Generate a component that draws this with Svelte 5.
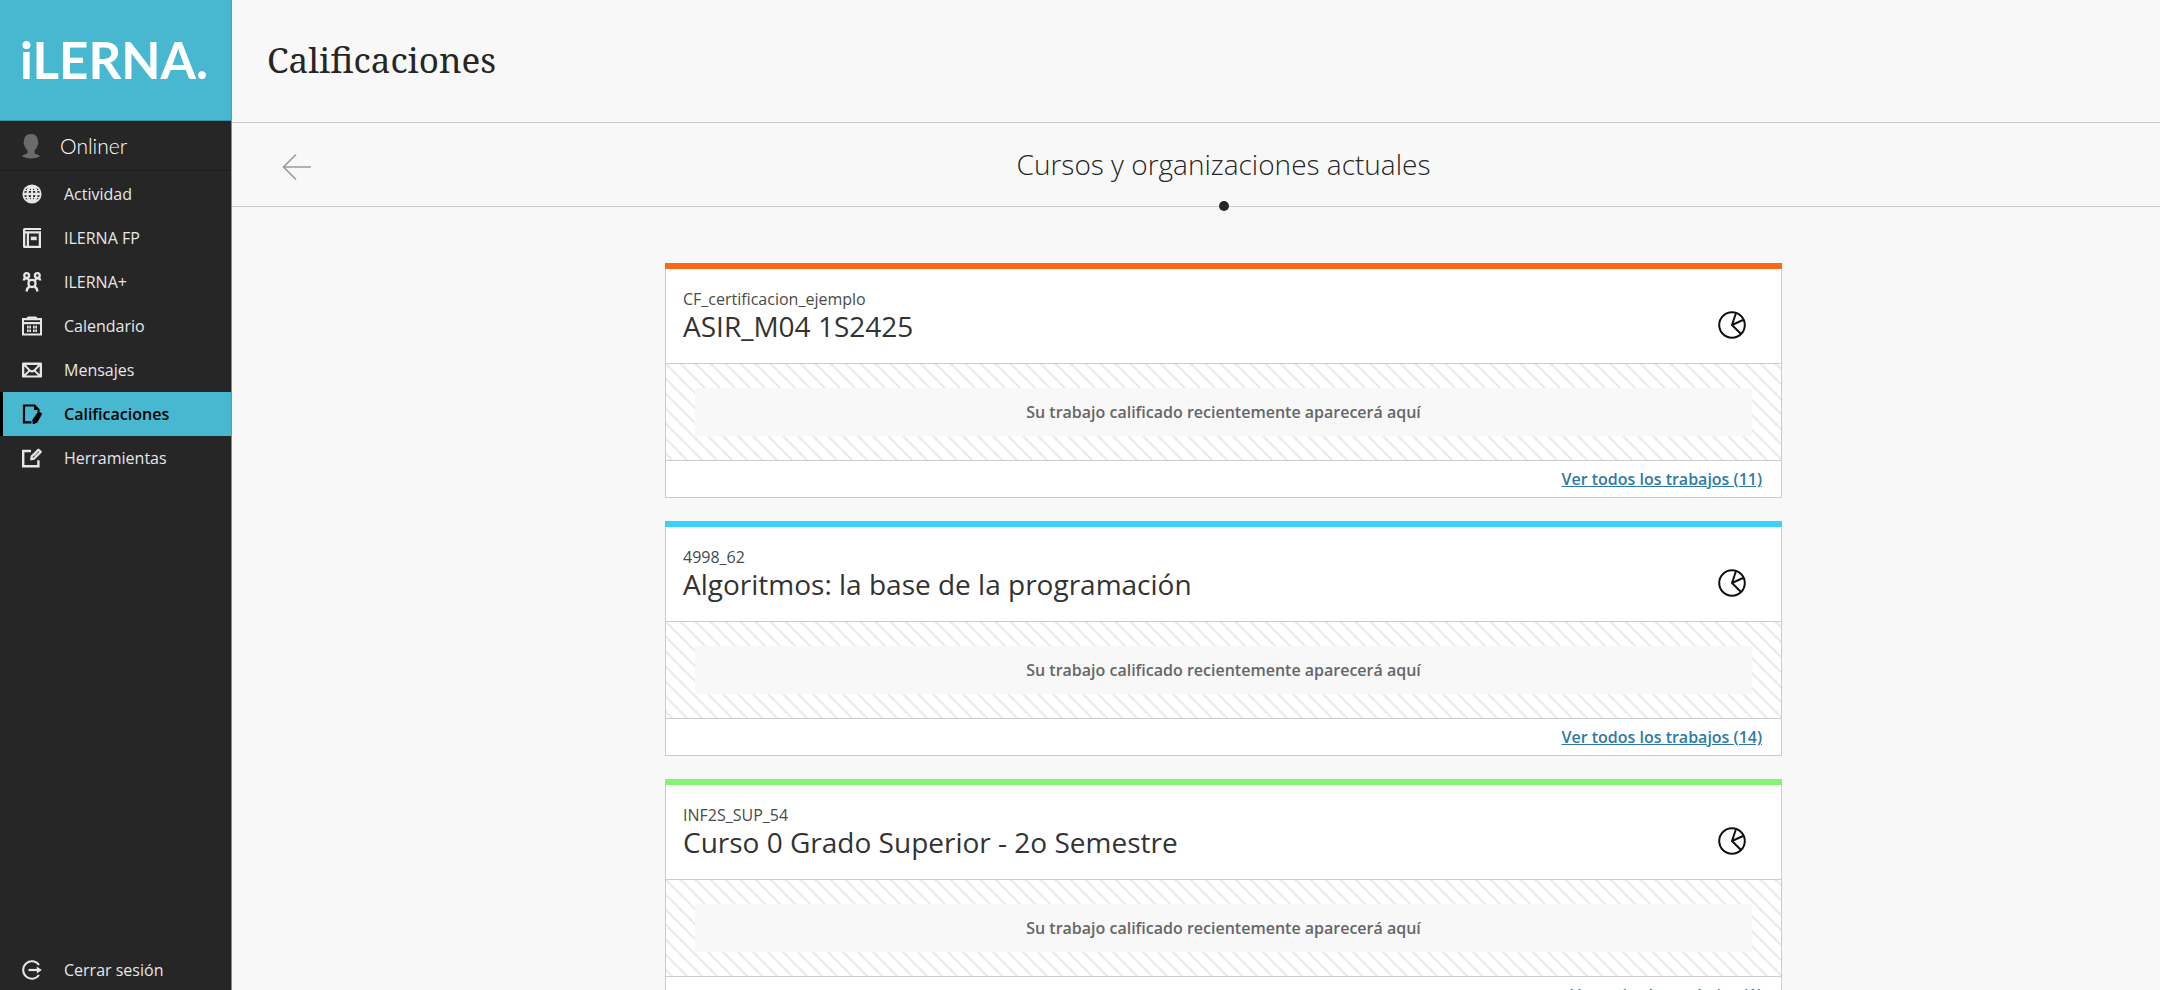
<script lang="ts">
  type Course = {
    code: string;
    name: string;
    color: string;
    works: number;
  };

  const navItems = [
    { id: "activity", label: "Actividad" },
    { id: "institution", label: "ILERNA FP" },
    { id: "groups", label: "ILERNA+" },
    { id: "calendar", label: "Calendario" },
    { id: "messages", label: "Mensajes" },
    { id: "grades", label: "Calificaciones" },
    { id: "tools", label: "Herramientas" },
  ];

  const courses: Course[] = [
    { code: "CF_certificacion_ejemplo", name: "ASIR_M04 1S2425", color: "#ff6615", works: 11 },
    { code: "4998_62", name: "Algoritmos: la base de la programación", color: "#38d3f8", works: 14 },
    { code: "INF2S_SUP_54", name: "Curso 0 Grado Superior - 2o Semestre", color: "#84f573", works: 1 },
  ];

  let active = $state("grades");
</script>

{#snippet icon(id: string)}
  <svg class="icon" viewBox="0 0 20 20" aria-hidden="true">
    {#if id === "activity"}
      <circle cx="10" cy="10" r="9.6" fill="currentColor" />
      <g fill="#262626">
        <path d="M9 4.400v4.400H6.500q.3-3 2.500-4.400zM11 4.400v4.400h2.500q-.3-3-2.500-4.400zM9 15.600v-4.400H6.500q.3 3 2.500 4.400zM11 15.600v-4.400h2.500q-.3 3-2.500 4.400z" />
        <path d="M5.600 3.800Q4.500 6 4.400 8.800H2.200Q2.800 5.500 5.600 3.800zM14.400 3.800q1.100 2.200 1.200 5h2.200q-.6-3.300-3.400-5zM5.600 16.200q-1.100-2.200-1.200-5H2.200q.6 3.300 3.400 5zM14.400 16.200q1.100-2.200 1.200-5h2.200q-.6 3.300-3.400 5z" />
      </g>
      <path d="M3 6.500h14M3 13.500h14" stroke="currentColor" stroke-width="1.200" />
    {:else if id === "institution"}
      <path fill="currentColor" fill-rule="evenodd" d="M2.600 0h16.400v2H3.200v1.300H19V20H2.600Q1 20 1 18.400V1.600Q1 0 2.600 0zM3.300 5.500v12.300h1.500V5.500zM7 5.500v12.300h9.700V5.500z" />
      <path fill="currentColor" d="M8.800 8.600h5.900v3.600H8.800z" />
    {:else if id === "groups"}
      <g fill="none" stroke="currentColor" stroke-width="2.300">
        <circle cx="4.700" cy="3.600" r="2.400" />
        <circle cx="15.300" cy="3.600" r="2.400" />
        <circle cx="10" cy="11.500" r="3.600" />
        <path d="M1.800 8.600q0-2.200 2.400-2.200h1.500l1.600 2.800M18.200 8.600q0-2.200-2.400-2.200h-1.500l-1.600 2.800M4.700 19.400q0-3.600 2.900-4.800M15.300 19.400q0-3.600-2.900-4.800" />
      </g>
    {:else if id === "calendar"}
      <path fill="currentColor" fill-rule="evenodd" d="M0 2h4.500q.5-1.500 2-1.500h7q1.500 0 2 1.500H20v17.500H0zM2 4.200v1.900h16V4.200zM2 8.300v9.200h16V8.300z" />
      <path fill="currentColor" d="M5 9.700h4v2.800H5zM11 9.700h4v2.800h-4zM5 13.600h4v2.500H5zM11 13.600h4v2.500h-4z" />
      <path stroke="#262626" stroke-width=".6" d="M7 9.500v7M13 9.500v7" />
    {:else if id === "messages"}
      <rect y="2.500" width="20" height="15" rx="1" fill="currentColor" />
      <path d="M4 5h12l-4.200 4.500q-1.800 1.500-3.600 0zM2.300 6.200l4 4.300-4 3.800zM17.700 6.200l-4 4.300 4 3.800zM4 15.400l3.700-3.600q2.300 1.500 4.600 0l3.700 3.600z" fill="#262626" />
    {:else if id === "grades"}
      <path d="M9.500 18.300H2V1.500h10.500l4 4.200v2" fill="none" stroke="currentColor" stroke-width="2.200" />
      <path d="M12 .5l5.500 5.600H12z" fill="currentColor" />
      <path d="M16.700 8.600l2.300 1.300-4.600 8-2.800 1.300-.2-3.100z" fill="currentColor" stroke="currentColor" stroke-width="2" stroke-linejoin="round" />
    {:else if id === "tools"}
      <path d="M9 3H1.200v15.200h15.200v-6" fill="none" stroke="currentColor" stroke-width="2.400" />
      <path d="M9.200 11.300l.6-3 6.600-6.600 2.300 2.200-6.600 6.700z" fill="none" stroke="currentColor" stroke-width="2.200" stroke-linejoin="round" />
      <path d="M12 8.300l4-4" stroke="currentColor" />
    {:else if id === "logout"}
      <path d="M17 5A8.700 8.700 0 1 0 17 15" fill="none" stroke="currentColor" stroke-width="2" />
      <path d="M6.500 10H17" stroke="currentColor" stroke-width="2.200" />
      <path d="M14.800 6.500l5 3.500-5 3.500z" fill="currentColor" />
    {/if}
  </svg>
{/snippet}

<div class="app">
  <aside class="sidebar">
    <a class="logo" href="#home">iLERNA.</a>
    <a class="profile" href="#profile">
      <svg class="avatar" viewBox="0 0 20 26" aria-hidden="true">
        <path fill="#6b6b6b" d="M10 1c4.500 0 7 2.800 7 7 0 .8.500 1.300.4 2.500-.1 1.200-.8 1.500-1 2.300-.5 2-1.600 3.600-2.900 4.700v2.300c0 1.500 4.500 1.600 5.500 3.200-1.400 1.500-5 2.500-9 2.500s-7.600-1-9-2.500c1-1.600 5.500-1.700 5.500-3.200v-2.300c-1.300-1.100-2.400-2.700-2.900-4.700-.2-.8-.9-1.100-1-2.300C2.500 9.300 3 8.800 3 8c0-4.200 2.500-7 7-7z" />
      </svg>
      <span>Onliner</span>
    </a>
    <nav>
      {#each navItems as item (item.id)}
        <a
          class="nav-item"
          class:active={active === item.id}
          href="#{item.id}"
          aria-current={active === item.id ? "page" : undefined}
          onclick={() => (active = item.id)}
        >
          {@render icon(item.id)}
          <span>{item.label}</span>
        </a>
      {/each}
    </nav>
    <a class="nav-item logout" href="#logout">
      {@render icon("logout")}
      <span>Cerrar sesión</span>
    </a>
  </aside>

  <main>
    <header class="page-header">
      <h1>Calificaciones</h1>
    </header>

    <div class="period-bar">
      <button class="back" type="button" aria-label="Anterior">
        <svg viewBox="0 0 30 28" aria-hidden="true">
          <path d="M29 14H2M14 1.500L1.500 14 14 26.500" fill="none" stroke="#999" stroke-width="1.600" />
        </svg>
      </button>
      <h2>Cursos y organizaciones actuales</h2>
    </div>

    <div class="courses">
      {#each courses as course (course.code)}
        <article class="card">
          <div class="stripe" style:background={course.color}></div>
          <div class="card-header">
            <div>
              <p class="code">{course.code}</p>
              <h3>{course.name}</h3>
            </div>
            <svg class="pie" viewBox="0 0 28 28" aria-hidden="true">
              <g fill="none" stroke="#111" stroke-width="2">
                <circle cx="14" cy="14" r="12.800" />
                <path d="M18 2L14 14l11-5M14 14l9 9" stroke-linejoin="round" />
              </g>
            </svg>
          </div>
          <div class="empty">
            <p>Su trabajo calificado recientemente aparecerá aquí</p>
          </div>
          <div class="card-footer">
            <a href="#{course.code}">Ver todos los trabajos ({course.works})</a>
          </div>
        </article>
      {/each}
    </div>
  </main>
</div>

<style>
  :global(body) {
    background: #f8f8f8;
  }

  .app {
    display: flex;
    height: 100vh;
    overflow: hidden;
    font-family: "Open Sans", "Noto Sans", sans-serif;
    font-size: 16px;
    color: #262626;
  }

  h1,
  h2,
  h3,
  p {
    margin: 0;
    font-weight: 400;
  }

  /* SIDEBAR */
  .sidebar {
    display: flex;
    flex-direction: column;
    flex: none;
    width: 231px;
    background: #262626;
    border-right: 1px solid #8a8a8a;
  }

  .sidebar a {
    text-decoration: none;
  }

  .logo {
    display: flex;
    align-items: center;
    height: 120px;
    padding-left: 20px;
    background: #48b8d0;
    border-bottom: 1px solid #3b92a5;
    color: #fff;
    font-family: Lato, sans-serif;
    font-size: 51px;
    font-weight: 700;
    line-height: 60px;
  }

  .profile {
    display: flex;
    align-items: center;
    gap: 19px;
    height: 49px;
    padding-left: 21px;
    border-bottom: 1px solid #1e1e1e;
    color: #fff;
    font-family: Lato, sans-serif;
    font-size: 21px;
    font-weight: 300;
  }

  .avatar {
    width: 20px;
    height: 26px;
  }

  nav {
    padding-top: 1px;
  }

  .nav-item {
    display: flex;
    align-items: center;
    gap: 22px;
    box-sizing: border-box;
    height: 44px;
    padding-left: 22px;
    color: #e6e6e6;
  }

  .nav-item.active {
    padding-left: 19px;
    background: #48b8d0;
    border-left: 3px solid #000;
    color: #000;
    font-weight: 600;
  }

  .icon {
    flex: none;
    width: 20px;
    height: 20px;
  }

  .nav-item.logout {
    height: 40px;
    margin-top: auto;
  }

  /* MAIN */
  main {
    flex: 1;
    min-width: 0;
    overflow-y: auto;
    scrollbar-width: none;
  }

  .page-header {
    display: flex;
    align-items: center;
    height: 122px;
    padding-left: 35px;
    border-bottom: 1px solid #ccc;
  }

  h1 {
    font-family: "Noto Serif", "DejaVu Serif", serif;
    font-size: 35px;
    line-height: 48px;
    padding-bottom: 2px;
  }

  .period-bar {
    display: grid;
    grid-template-columns: 80px 1fr 25px;
    align-items: center;
    height: 83px;
    border-bottom: 1px solid #ccc;
  }

  .back {
    display: flex;
    justify-content: flex-end;
    padding: 8px 0 4px;
    background: none;
    border: none;
    cursor: pointer;
  }

  .back svg {
    width: 30px;
    height: 28px;
  }

  h2 {
    position: relative;
    font-size: 28px;
    font-weight: 300;
    line-height: 83px;
    text-align: center;
  }

  /* marks the current period on the divider */
  h2::after {
    content: "";
    position: absolute;
    bottom: -5px;
    left: 50%;
    width: 10px;
    height: 10px;
    border-radius: 50%;
    background: #262626;
    transform: translateX(-50%);
  }

  .courses {
    display: flex;
    flex-direction: column;
    gap: 23px;
    padding: 56px 0 56px 55px;
  }

  /* COURSE CARD */
  .card {
    width: 100%;
    max-width: 1117px;
    margin: 0 auto;
  }

  .stripe {
    height: 6px;
  }

  .card-header {
    display: flex;
    align-items: center;
    justify-content: space-between;
    height: 94px;
    padding: 0 35px 0 17px;
    background: #fff;
    border: solid #ccc;
    border-width: 0 1px 1px;
  }

  .code {
    line-height: 22px;
    color: #4a4a4a;
  }

  h3 {
    font-size: 28px;
    line-height: 32px;
    padding-bottom: 2px;
    color: #333;
  }

  .pie {
    width: 28px;
    height: 28px;
    margin-top: 18px;
  }

  .empty {
    padding: 24px 29px;
    background: #fff linear-gradient(
      45deg,
      #ebebeb 5%,
      transparent 9%,
      transparent 43%,
      #ebebeb 47%,
      #ebebeb 53%,
      transparent 57%,
      transparent 91%,
      #ebebeb 95%
    );
    background-size: 15px 15px;
    border: solid #ccc;
    border-width: 0 1px 1px;
  }

  .empty p {
    background: #f8f8f8;
    line-height: 48px;
    text-align: center;
    color: #666;
    font-weight: 600;
  }

  .card-footer {
    display: flex;
    align-items: center;
    justify-content: flex-end;
    height: 36px;
    padding-right: 19px;
    background: #fff;
    border: solid #ccc;
    border-width: 0 1px 1px;
  }

  .card-footer a {
    color: #2d7ba6;
    font-weight: 600;
  }
</style>
